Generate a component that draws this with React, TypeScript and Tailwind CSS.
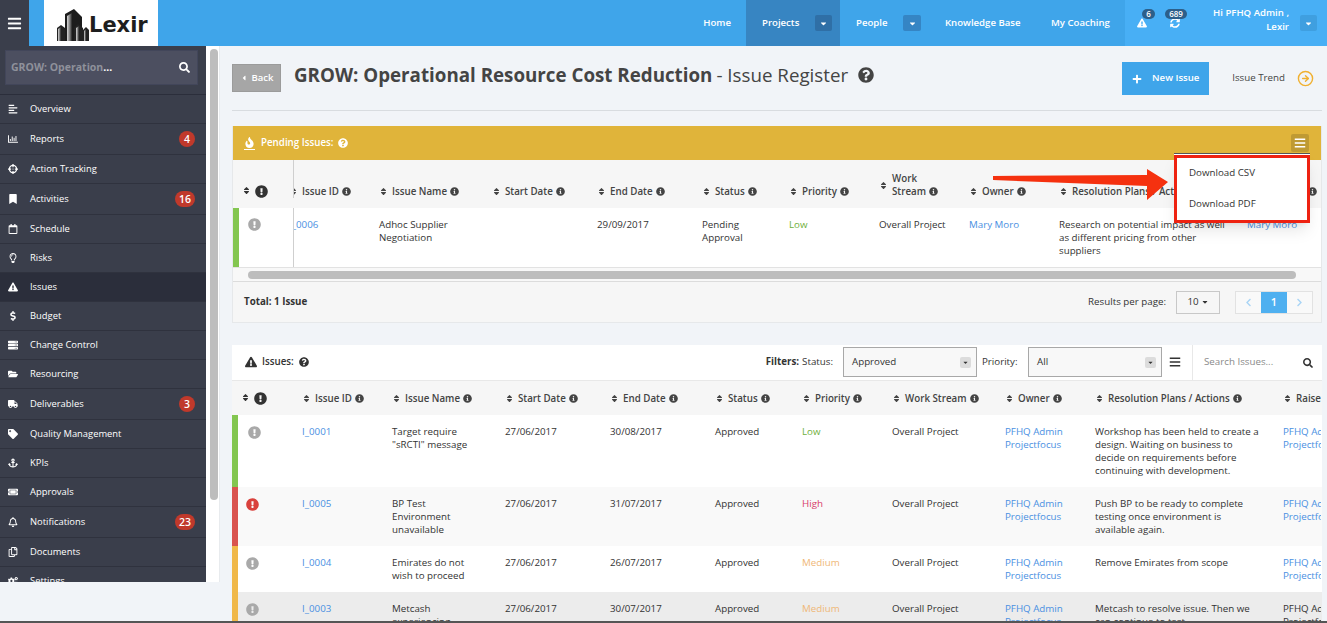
import type { ReactNode } from "react";
import { CircleArrowRight } from "lucide-react";
import {
  FaAlignLeft,
  FaAnchor,
  FaBars,
  FaBookmark,
  FaCaretDown,
  FaChevronLeft,
  FaChevronRight,
  FaCogs,
  FaCrosshairs,
  FaDollarSign,
  FaExclamationCircle,
  FaExclamationTriangle,
  FaFire,
  FaFolderOpen,
  FaInfoCircle,
  FaPlus,
  FaQuestionCircle,
  FaRegBell,
  FaRegCalendar,
  FaRegChartBar,
  FaRegCopy,
  FaRegLightbulb,
  FaSearch,
  FaServer,
  FaSort,
  FaSyncAlt,
  FaTag,
  FaTicketAlt,
  FaTruck,
  FaCaretLeft,
} from "react-icons/fa";

const navItems = [
  { label: "Overview", icon: <FaAlignLeft /> },
  { label: "Reports", icon: <FaRegChartBar />, badge: "4" },
  { label: "Action Tracking", icon: <FaCrosshairs /> },
  { label: "Activities", icon: <FaBookmark />, badge: "16" },
  { label: "Schedule", icon: <FaRegCalendar /> },
  { label: "Risks", icon: <FaRegLightbulb /> },
  { label: "Issues", icon: <FaExclamationTriangle />, active: true },
  { label: "Budget", icon: <FaDollarSign /> },
  { label: "Change Control", icon: <FaServer /> },
  { label: "Resourcing", icon: <FaFolderOpen /> },
  { label: "Deliverables", icon: <FaTruck />, badge: "3" },
  { label: "Quality Management", icon: <FaTag /> },
  { label: "KPIs", icon: <FaAnchor /> },
  { label: "Approvals", icon: <FaTicketAlt /> },
  { label: "Notifications", icon: <FaRegBell />, badge: "23" },
  { label: "Documents", icon: <FaRegCopy /> },
  { label: "Settings", icon: <FaCogs /> },
];

const pendingCols = "grid grid-cols-[61px_85px_113px_105px_105px_87px_90px_90px_90px_188px_76px]";
const issueCols = "grid grid-cols-[70px_90px_113px_105px_105px_87px_90px_113px_90px_188px_38px]";

const issues = [
  {
    id: "I_0001",
    name: 'Target require "sRCTI" message',
    start: "27/06/2017",
    end: "30/08/2017",
    priority: "Low",
    plan: "Workshop has been held to create a design. Waiting on business to decide on requirements before continuing with development.",
    stripe: "border-[#83c650]",
    bg: "bg-white",
    pl: "pl-[10px]",
  },
  {
    id: "I_0005",
    name: "BP Test Environment unavailable",
    start: "27/06/2017",
    end: "31/07/2017",
    priority: "High",
    plan: "Push BP to be ready to complete testing once environment is available again.",
    stripe: "border-[#d9534f]",
    bg: "bg-[#f9f9f9]",
    pl: "pl-[8px]",
  },
  {
    id: "I_0004",
    name: "Emirates do not wish to proceed",
    start: "27/06/2017",
    end: "26/07/2017",
    priority: "Medium",
    plan: "Remove Emirates from scope",
    stripe: "border-[#f0b849]",
    bg: "bg-white",
    pl: "pl-[8px]",
  },
  {
    id: "I_0003",
    name: "Metcash experiencing",
    start: "27/06/2017",
    end: "30/07/2017",
    priority: "Medium",
    plan: "Metcash to resolve issue. Then we can continue to test",
    stripe: "border-[#f0b849]",
    bg: "bg-[#ececec]",
    pl: "pl-[8px]",
  },
];

function priorityColor(p: string) {
  if (p === "Low") return "text-[#6fb03c]";
  if (p === "High") return "text-[#d8406a]";
  return "text-[#efb878]";
}

function HeadCell({ label, className = "" }: { label: ReactNode; className?: string }) {
  return (
    <div className={`flex h-full items-end text-[9.75px] leading-[13px] font-semibold text-[#444] ${className}`}>
      <span className="flex w-max items-center">
        <FaSort className="mr-[4px] shrink-0 text-[9px] text-[#444]" />
        <span className="whitespace-nowrap">{label}</span>
      </span>
    </div>
  );
}

function Info() {
  return <FaInfoCircle className="ml-[3px] inline-block align-[-1px] text-[9px] text-[#444]" />;
}

function Head({ children }: { children: string }) {
  return (
    <>
      {children}
      <Info />
    </>
  );
}

function SortAlert() {
  return (
    <div className="flex items-center gap-[4px] pl-[9px] text-[#333]">
      <FaSort className="-mt-[2px] text-[9px]" />
      <FaExclamationCircle className="text-[13px]" />
    </div>
  );
}

function Sidebar() {
  return (
    <aside className="w-[206px] shrink-0 overflow-hidden bg-[#3a3e4b] font-semibold">
      <div className="border-b border-[#2b2e3b] pt-[4px] pr-[8px] pb-[9px] pl-[5px]">
        <div className="flex h-[35px] items-center justify-between border border-[#42465a] bg-[#4c4f60] pr-[7px] pl-[5px]">
          <span className="text-[10.5px] font-bold text-[#8f919b]">
            GROW: Operation<span className="text-white">...</span>
          </span>
          <FaSearch className="text-[11px] text-white" />
        </div>
      </div>
      {navItems.map((item) => (
        <div
          key={item.label}
          className={`flex items-center border-b border-[#2f323e] pr-[11px] pl-[8px] ${item.active ? "bg-[#2b2e3b]" : ""}`}
        >
          <span className="flex h-[28px] w-[22px] shrink-0 items-center justify-start text-[10px] text-white">
            {item.icon}
          </span>
          <span className="flex-1 text-[9.4px] leading-[14px] font-normal text-white">{item.label}</span>
          {item.badge && (
            <span className="my-[7px] flex h-[16px] min-w-[16px] items-center justify-center rounded-full bg-[#c0392b] px-[4px] text-[10.5px] leading-none font-semibold text-white">
              {item.badge}
            </span>
          )}
        </div>
      ))}
    </aside>
  );
}

function TopBar() {
  return (
    <header className="flex h-[46px] shrink-0 items-stretch bg-[#3fa5ea] text-[9.6px] font-semibold text-white">
      <div className="flex w-[29px] items-center justify-center bg-[#3a3e4b] text-[15px]">
        <FaBars />
      </div>
      <div className="ml-[15px] flex w-[114px] items-center bg-white pl-[12px]">
        <svg viewBox="0 0 34 34" className="mt-[4px] h-[34px] w-[34px] shrink-0">
          <defs>
            <linearGradient id="tower" x1="0" x2="1" y1="0" y2="0">
              <stop offset="0" stopColor="#d8d8d8" />
              <stop offset="0.6" stopColor="#777" />
              <stop offset="1" stopColor="#222" />
            </linearGradient>
          </defs>
          <path d="M9 33V6l9-5 8 8v24z" fill="#1c1c1c" />
          <path d="M11 33V8l5-3v28z" fill="url(#tower)" />
          <path d="M1 33V20l4-3 4 3v13z" fill="#222" />
          <path d="M2 33V21l3-2v14z" fill="url(#tower)" />
          <path d="M18 33V20l4-4 5 4v13z" fill="#222" />
          <path d="M20 33V20l3-2v15z" fill="url(#tower)" />
          <path d="M27 33V22l3-3 3 3v11z" fill="#222" />
          <path d="M28 33V23l2-2v12z" fill="url(#tower)" />
        </svg>
        <span className="mt-[5px] -ml-[1px] font-['DejaVu_Sans',sans-serif] text-[21px] leading-none font-bold text-[#1e1e1e]">Lexir</span>
      </div>
      <nav className="ml-auto flex items-stretch">
        <a className="flex items-center pr-[15px]">Home</a>
        <div className="flex w-[94px] items-center bg-[#3785c2] pl-[16px]">
          <span>Projects</span>
          <span className="mr-[8px] ml-auto flex h-[16px] w-[17px] items-center justify-center rounded-[2px] bg-[#2f6fa6] text-[9px]">
            <FaCaretDown />
          </span>
        </div>
        <div className="flex w-[81px] items-center pl-[16px]">
          <span>People</span>
          <span className="ml-auto flex h-[16px] w-[18px] items-center justify-center rounded-[2px] bg-[#3585c4] text-[9px]">
            <FaCaretDown />
          </span>
        </div>
        <a className="ml-[24px] flex w-[106px] items-center">Knowledge Base</a>
        <a className="flex w-[74px] items-center">My Coaching</a>
        <div className="flex w-[202px] items-center bg-[#48aff5]">
          <span className="relative ml-[12px] text-[10px]">
            <FaExclamationTriangle />
            <span className="absolute -top-[9px] left-[5px] flex h-[10px] w-[13px] items-center justify-center rounded-full bg-[#2c5f8a] text-[8px] leading-none">6</span>
          </span>
          <span className="relative ml-[23px] text-[10px]">
            <FaSyncAlt />
            <span className="absolute -top-[9px] -left-[5px] flex h-[10px] w-[22px] items-center justify-center rounded-full bg-[#2c5f8a] text-[8px] leading-none">689</span>
          </span>
          <span className="-mt-[6px] ml-[30px] w-[79px] text-right text-[9.6px] leading-[14px]">Hi PFHQ Admin , Lexir</span>
          <span className="ml-[11px] flex h-[16px] w-[17px] items-center justify-center rounded-[2px] bg-[#3f9fe0] text-[9px]">
            <FaCaretDown />
          </span>
        </div>
      </nav>
    </header>
  );
}

function PageHead() {
  return (
    <div className="flex h-[65px] items-start border-b border-[#d8dce0] pr-[8px]">
      <button className="mt-[18px] flex h-[28px] w-[49px] items-center justify-center gap-[4px] border border-[#9b9b9b] bg-[#a6a6a6] text-[9.5px] font-semibold text-white">
        <FaCaretLeft className="text-[8px]" />
        Back
      </button>
      <h1 className="mt-[15px] ml-[13px] flex items-center text-[18.75px] leading-[28px] text-[#444]">
        <span className="font-bold">GROW: Operational Resource Cost Reduction</span>
        <span className="ml-[4px]">- Issue Register</span>
        <FaQuestionCircle className="ml-[10px] text-[16px]" />
      </h1>
      <button className="mt-[16px] ml-auto flex h-[33px] w-[87px] items-center justify-center gap-[10px] bg-[#3fa5ea] text-[9.6px] font-semibold text-white">
        <FaPlus className="text-[10px]" />
        New Issue
      </button>
      <span className="mt-[26px] ml-[23px] text-[9.75px] leading-[12px] text-[#444]">Issue Trend</span>
      <CircleArrowRight className="mt-[24px] ml-[12px] size-[17px] text-[#f0b030]" strokeWidth={2} />
    </div>
  );
}

function PendingPanel() {
  return (
    <section className="relative mt-[15px] border border-t-0 border-[#e6e8ea] bg-[#f6f6f6]">
      <div className="flex h-[34px] items-center justify-between bg-[#e0b43a] pr-[12px] pl-[11px] text-white">
        <span className="flex items-center text-[9.75px] font-semibold">
          <span className="border-b border-white pb-[1px] text-[11px]">
            <FaFire />
          </span>
          <span className="ml-[6px]">Pending Issues:</span>
          <FaQuestionCircle className="ml-[5px] text-[10px]" />
        </span>
        <span className="flex h-[18px] w-[18px] items-center justify-center rounded-[2px] bg-[#bf9a32] text-[12px]">
          <FaBars />
        </span>
      </div>
      <div className={`${pendingCols} h-[48px] overflow-hidden bg-[#f6f6f6] pb-[10px]`}>
        <div className="flex items-end border-r border-[#cfcfcf]">
          <SortAlert />
        </div>
        <div className="overflow-hidden">
          <HeadCell label={<Head>Issue ID</Head>} className="-ml-[5px]" />
        </div>
        <HeadCell label={<Head>Issue Name</Head>} />
        <HeadCell label={<Head>Start Date</Head>} />
        <HeadCell label={<Head>End Date</Head>} />
        <HeadCell label={<Head>Status</Head>} />
        <HeadCell label={<Head>Priority</Head>} />
        <HeadCell label={<>Work<br />Stream<Info /></>} />
        <HeadCell label={<Head>Owner</Head>} />
        <HeadCell label={<Head>Resolution Plans / Actions</Head>} />
        <HeadCell label={<Head>Raised By</Head>} />
      </div>
      <div className={`${pendingCols} overflow-hidden border-b border-[#e2e2e2] bg-white text-[9.75px] leading-[13px] text-[#333]`}>
        <div className="border-r border-l-[6px] border-r-[#cfcfcf] border-l-[#83c650] pt-[10px] pl-[9px]">
          <FaExclamationCircle className="text-[13px] text-[#a9a9a9]" />
        </div>
        <div className="overflow-hidden pt-[10px]">
          <span className="-ml-[5px] block text-[#4a90e2]">I_0006</span>
        </div>
        <div className="py-[10px] pr-[20px]">Adhoc Supplier Negotiation</div>
        <div className="py-[10px]"></div>
        <div className="py-[10px]">29/09/2017</div>
        <div className="py-[10px] pr-[20px]">Pending Approval</div>
        <div className="py-[10px] text-[#6fb03c]">Low</div>
        <div className="py-[10px]">Overall Project</div>
        <div className="py-[10px] text-[#4a90e2]">Mary Moro</div>
        <div className="py-[10px] pr-[18px]">Research on potential impact as well as different pricing from other suppliers</div>
        <div className="py-[10px] text-[#4a90e2]">Mary Moro</div>
      </div>
      <div className="h-[13px] bg-[#f8f8f8] pt-[3px] pl-[15px]">
        <div className="h-[8px] w-[1048px] rounded-full bg-[#bdbdbd]"></div>
      </div>
      <div className="flex h-[41px] items-center border-t border-[#dcdcdc] pr-[8px] pl-[11px] text-[9.75px] text-[#333]">
        <span className="font-bold">Total: 1 Issue</span>
        <span className="ml-auto">Results per page:</span>
        <span className="ml-[10px] flex h-[23px] w-[44px] items-center justify-center gap-[2px] border border-[#c8c8c8] bg-[#f6f6f6]">
          10 <FaCaretDown className="text-[8px]" />
        </span>
        <div className="ml-[15px] flex h-[23px] w-[78px] border border-[#e2e2e2] bg-[#f9f9f9] text-[#a8d4f5]">
          <span className="flex w-[25px] items-center justify-center text-[9px]"><FaChevronLeft /></span>
          <span className="flex w-[26px] items-center justify-center bg-[#4fb0f0] text-[11px] font-semibold text-white">1</span>
          <span className="flex w-[25px] items-center justify-center text-[9px]"><FaChevronRight /></span>
        </div>
      </div>

      {/* annotation the screenshot's author drew over the table */}
      <svg viewBox="0 0 176 34" className="absolute top-[42px] left-[760px] h-[34px] w-[176px]">
        <polygon points="0,8 154,7 154,1 175,14 154,32 154,18 0,12" fill="#f5310f" />
      </svg>
      <div className="absolute top-[27px] left-[941px] w-[136px] border-t border-[#555] bg-white shadow-lg">
        <div className="mt-[1px] border-[3px] border-[#ee2211] pt-[8px] pb-[10px] text-[9.75px] leading-[13px] text-[#333]">
          <div className="px-[12px]">Download CSV</div>
          <div className="mt-[18px] px-[12px]">Download PDF</div>
        </div>
      </div>
    </section>
  );
}

function FilterSelect({ value }: { value: string }) {
  return (
    <span className="flex h-[30px] w-[134px] items-center justify-between border border-[#a8a8a8] bg-[#f8f8f8] pr-[5px] pl-[8px] text-[9.75px] text-[#333]">
      {value}
      <span className="flex h-[11px] w-[11px] items-center justify-center rounded-[2px] bg-[#dcdcdc] text-[7px]">
        <FaCaretDown />
      </span>
    </span>
  );
}

function IssuesPanel() {
  return (
    <section className="mt-[22px] bg-white">
      <div className="flex h-[36px] items-center border-b border-[#e8e8e8] pb-[1px] pl-[13px] text-[9.75px] text-[#333]">
        <FaExclamationTriangle className="text-[12px]" />
        <span className="ml-[5px] font-semibold">Issues:</span>
        <FaQuestionCircle className="ml-[5px] text-[10px]" />
        <span className="ml-auto font-bold">Filters:</span>
        <span className="mr-[10px] ml-[3px]">Status:</span>
        <FilterSelect value="Approved" />
        <span className="ml-[5px] w-[46px]">Priority:</span>
        <FilterSelect value="All" />
        <FaBars className="ml-[7px] text-[12px]" />
        <div className="-mb-[1px] ml-[11px] flex h-[35px] w-[130px] items-center border-l border-[#e8e8e8] pr-[9px] pl-[11px]">
          <span className="flex-1 text-[#8a8a8a]">Search Issues...</span>
          <FaSearch className="text-[10px]" />
        </div>
      </div>
      <div className={`${issueCols} h-[34px] overflow-hidden bg-[#f6f6f6] pb-[10px]`}>
        <div className="flex items-end">
          <SortAlert />
        </div>
        <HeadCell label={<Head>Issue ID</Head>} />
        <HeadCell label={<Head>Issue Name</Head>} />
        <HeadCell label={<Head>Start Date</Head>} />
        <HeadCell label={<Head>End Date</Head>} />
        <HeadCell label={<Head>Status</Head>} />
        <HeadCell label={<Head>Priority</Head>} />
        <HeadCell label={<Head>Work Stream</Head>} />
        <HeadCell label={<Head>Owner</Head>} />
        <HeadCell label={<Head>Resolution Plans / Actions</Head>} />
        <div className="overflow-hidden">
          <HeadCell label="Raised By" />
        </div>
      </div>
      {issues.map((row, i) => (
        <div key={row.id} className={`${issueCols} ${row.bg} text-[9.75px] leading-[13px] text-[#333]`}>
          <div className={`border-l-[6px] ${row.stripe} ${row.pl} pt-[11px]`}>
            <FaExclamationCircle className={`text-[13px] ${row.priority === "High" ? "text-[#d9413c]" : "text-[#a9a9a9]"}`} />
          </div>
          <div className="py-[10px] text-[#4a90e2]">{row.id}</div>
          <div className="py-[10px] pr-[20px]">{row.name}</div>
          <div className="py-[10px]">{row.start}</div>
          <div className="py-[10px]">{row.end}</div>
          <div className="py-[10px]">Approved</div>
          <div className={`py-[10px] ${priorityColor(row.priority)}`}>{row.priority}</div>
          <div className="py-[10px]">Overall Project</div>
          <div className="py-[10px] pr-[20px] text-[#4a90e2]">PFHQ Admin Projectfocus</div>
          <div className="py-[10px] pr-[20px]">{row.plan}</div>
          <div className={`overflow-hidden py-[10px] whitespace-nowrap ${i === 3 ? "text-[#333]" : "text-[#4a90e2]"}`}>
            PFHQ Admin<br />Projectfocus
          </div>
        </div>
      ))}
    </section>
  );
}

export default function App() {
  return (
    <div className="flex h-[623px] w-[1327px] flex-col overflow-hidden bg-[#f1f4f8] font-['Open_Sans',sans-serif]">
      <TopBar />
      <div className="flex min-h-0 flex-1 items-start">
        <div className="flex h-[536px] shrink-0">
          <Sidebar />
          <div className="w-[14px] shrink-0 border-r border-[#e8ebee] bg-white pt-[3px] pl-[4px]">
            <div className="h-[451px] w-[8px] rounded-full bg-[#bdbdbd]"></div>
          </div>
        </div>
        <main className="min-w-0 flex-1 overflow-hidden pr-[5px] pl-[12px]">
          <PageHead />
          <PendingPanel />
          <IssuesPanel />
        </main>
      </div>
      <div className="h-[2px] shrink-0 bg-[#555]"></div>
    </div>
  );
}
